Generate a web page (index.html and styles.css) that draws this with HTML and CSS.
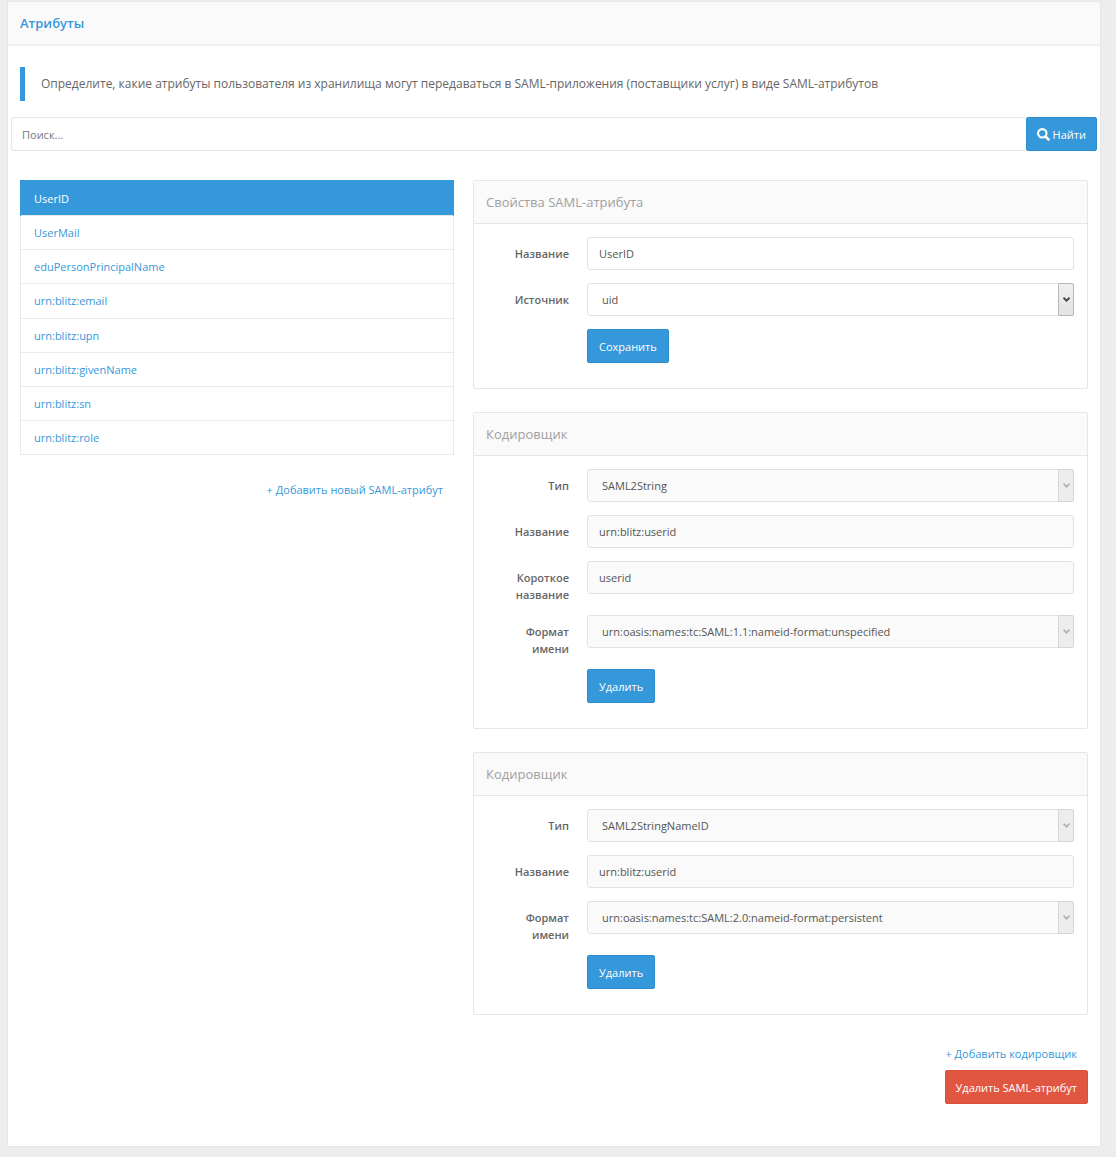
FILE: index.html
```html
<!DOCTYPE html>
<html lang="ru">
<head>
<meta charset="utf-8">
<meta name="viewport" content="width=device-width, initial-scale=1">
<title>Атрибуты</title>
<link rel="stylesheet" href="styles.css">
</head>
<body>
<main class="card">
  <header class="card-head"><h1 class="card-title">Атрибуты</h1></header>
  <div class="card-body">
    <p class="note">Определите, какие атрибуты пользователя из хранилища могут передаваться в SAML-приложения (поставщики услуг) в виде SAML-атрибутов</p>

    <form class="search" role="search">
      <input class="search-input" type="text" placeholder="Поиск..." aria-label="Поиск">
      <button class="btn search-btn" type="button">
        <svg class="search-icon" viewBox="0 0 13 13" aria-hidden="true"><circle cx="5.3" cy="5.3" r="4.2" fill="none" stroke="currentColor" stroke-width="2.1"/><path d="M8.5 8.5L11.6 11.6" stroke="currentColor" stroke-width="2.5" stroke-linecap="round"/></svg>
        Найти
      </button>
    </form>

    <div class="columns">
      <nav class="side">
        <ul class="list">
          <li class="list-row"><a class="list-link active" href="#">UserID</a></li>
          <li class="list-row"><a class="list-link" href="#">UserMail</a></li>
          <li class="list-row"><a class="list-link" href="#">eduPersonPrincipalName</a></li>
          <li class="list-row"><a class="list-link" href="#">urn:blitz:email</a></li>
          <li class="list-row"><a class="list-link" href="#">urn:blitz:upn</a></li>
          <li class="list-row"><a class="list-link" href="#">urn:blitz:givenName</a></li>
          <li class="list-row"><a class="list-link" href="#">urn:blitz:sn</a></li>
          <li class="list-row"><a class="list-link" href="#">urn:blitz:role</a></li>
        </ul>
        <a class="add-link" href="#">+ Добавить новый SAML-атрибут</a>
      </nav>

      <div class="details">
        <section class="panel">
          <h2 class="panel-title">Свойства SAML-атрибута</h2>
          <form class="panel-form">
            <div class="row">
              <label class="label" for="name">Название</label>
              <input class="field" id="name" type="text" value="UserID">
            </div>
            <div class="row">
              <label class="label" for="source">Источник</label>
              <div class="select">
                <select class="field" id="source"><option>uid</option></select>
                <span class="arrow"><svg class="chevron" viewBox="0 0 7 5" aria-hidden="true"><path d="M0.5 0.7L3.5 3.7L6.5 0.7" fill="none" stroke="currentColor" stroke-width="1.8"/></svg></span>
              </div>
            </div>
            <div class="actions"><button class="btn" type="button">Сохранить</button></div>
          </form>
        </section>

        <section class="panel">
          <h2 class="panel-title">Кодировщик</h2>
          <form class="panel-form">
            <div class="row">
              <label class="label" for="type1">Тип</label>
              <div class="select">
                <select class="field" id="type1" disabled><option>SAML2String</option></select>
                <span class="arrow"><svg class="chevron" viewBox="0 0 7 5" aria-hidden="true"><path d="M0.5 0.7L3.5 3.7L6.5 0.7" fill="none" stroke="currentColor" stroke-width="1.8"/></svg></span>
              </div>
            </div>
            <div class="row">
              <label class="label" for="name1">Название</label>
              <input class="field" id="name1" type="text" value="urn:blitz:userid" disabled>
            </div>
            <div class="row">
              <label class="label" for="short1">Короткое название</label>
              <input class="field" id="short1" type="text" value="userid" disabled>
            </div>
            <div class="row">
              <label class="label" for="format1">Формат имени</label>
              <div class="select">
                <select class="field" id="format1" disabled><option>urn:oasis:names:tc:SAML:1.1:nameid-format:unspecified</option></select>
                <span class="arrow"><svg class="chevron" viewBox="0 0 7 5" aria-hidden="true"><path d="M0.5 0.7L3.5 3.7L6.5 0.7" fill="none" stroke="currentColor" stroke-width="1.8"/></svg></span>
              </div>
            </div>
            <div class="actions"><button class="btn" type="button">Удалить</button></div>
          </form>
        </section>

        <section class="panel">
          <h2 class="panel-title">Кодировщик</h2>
          <form class="panel-form">
            <div class="row">
              <label class="label" for="type2">Тип</label>
              <div class="select">
                <select class="field" id="type2" disabled><option>SAML2StringNameID</option></select>
                <span class="arrow"><svg class="chevron" viewBox="0 0 7 5" aria-hidden="true"><path d="M0.5 0.7L3.5 3.7L6.5 0.7" fill="none" stroke="currentColor" stroke-width="1.8"/></svg></span>
              </div>
            </div>
            <div class="row">
              <label class="label" for="name2">Название</label>
              <input class="field" id="name2" type="text" value="urn:blitz:userid" disabled>
            </div>
            <div class="row">
              <label class="label" for="format2">Формат имени</label>
              <div class="select">
                <select class="field" id="format2" disabled><option>urn:oasis:names:tc:SAML:2.0:nameid-format:persistent</option></select>
                <span class="arrow"><svg class="chevron" viewBox="0 0 7 5" aria-hidden="true"><path d="M0.5 0.7L3.5 3.7L6.5 0.7" fill="none" stroke="currentColor" stroke-width="1.8"/></svg></span>
              </div>
            </div>
            <div class="actions"><button class="btn" type="button">Удалить</button></div>
          </form>
        </section>

        <div class="footer">
          <a class="add-link" href="#">+ Добавить кодировщик</a>
          <button class="btn danger" type="button">Удалить SAML-атрибут</button>
        </div>
      </div>
    </div>
  </div>
</main>
</body>
</html>
```
FILE: styles.css
```css
*, *::before, *::after { box-sizing: border-box; }

body {
  margin: 0;
  padding: 1px 15px 10px 7px;
  background: #ededed;
  color: #666;
  font-family: "Open Sans", "Noto Sans", sans-serif;
  font-size: 11px;
  line-height: 17px;
}

a { color: #3598db; text-decoration: none; }

.card {
  border: 1px solid #e6e6e6;
  background: #fff;
}

.card-head {
  padding: 12px;
  border-bottom: 2px solid #efefef;
  background: #fafafa;
}

.card-title {
  margin: 0;
  color: #3598db;
  font-size: 13px;
  font-weight: 600;
  line-height: 18px;
}

.card-body { padding: 21px 3px 42px; }

.note {
  margin: 0 9px;
  padding: 8px 16px;
  border-left: 5px solid #3598db;
  font-size: 12px;
  line-height: 18px;
}

.search {
  display: flex;
  margin-top: 16px;
}

.search-input {
  flex: 1;
  min-width: 0;
  height: 34px;
  padding: 0 10px;
  border: 1px solid #e5e5e5;
  border-right: 0;
  border-radius: 3px 0 0 3px;
  background: #fff;
  color: #555;
  font: inherit;
}

.search-input::placeholder { color: #777; opacity: 1; }

.btn {
  height: 34px;
  padding: 0 11px;
  border: 1px solid #2c8dd0;
  border-radius: 2px;
  background: #3598db;
  color: #fff;
  font: inherit;
}

.search-btn {
  display: flex;
  align-items: center;
  gap: 3px;
  padding: 0 10px;
}

.search-icon { width: 13px; height: 13px; }

.columns {
  display: grid;
  grid-template-columns: 434fr 615fr;
  gap: 19px;
  margin: 29px 9px 0;
}

.side, .details {
  display: flex;
  flex-direction: column;
}

.list {
  display: grid;
  grid-auto-rows: 1fr;
  min-height: 275px;
  margin: 0;
  padding: 0;
  border: 1px solid #e9e9e9;
  list-style: none;
}

.list-row { display: grid; }

.list-row + .list-row { border-top: 1px solid #e9e9e9; }

.list-link {
  display: flex;
  align-items: center;
  padding: 0 13px;
}

.list-link.active {
  margin: -1px;
  padding: 0 14px;
  background: #3598db;
  color: #fff;
}

.add-link { align-self: flex-end; margin: 0 11px; }

.side .add-link { margin-top: 26px; }

.details { gap: 23px; }

.panel { border: 1px solid #e6e6e6; border-radius: 2px; }

.panel-title {
  margin: 0;
  padding: 12px;
  border-bottom: 1px solid #e6e6e6;
  background: #fafafa;
  color: #a0a0a0;
  font-size: 13px;
  font-weight: 400;
  line-height: 18px;
}

.panel-form {
  display: flex;
  flex-direction: column;
  gap: 13px;
  padding: 13px 13px 25px;
}

.row {
  display: grid;
  grid-template-columns: 82px 1fr;
  gap: 18px;
  align-items: start;
}

.label {
  margin-bottom: -1px;
  padding: 8px 0 0 20px;
  font-weight: 600;
  text-align: right;
}

.field {
  width: 100%;
  height: 33px;
  padding: 0 11px;
  border: 1px solid #e2e2e2;
  border-radius: 3px;
  background: #fff;
  color: #555;
  font: inherit;
  appearance: none;
}

.field:disabled {
  background: #fafafa;
  color: #555;
  opacity: 1;
}

.select { position: relative; display: flex; }

.select .field { padding: 0 30px 0 14px; }

.arrow {
  position: absolute;
  top: 0;
  right: 0;
  display: flex;
  align-items: center;
  justify-content: center;
  width: 16px;
  height: 100%;
  border: 1px solid #b8b8b8;
  border-radius: 0 2px 2px 0;
  background: linear-gradient(#f0f0f0, #e2e2e2);
  color: #444;
  pointer-events: none;
}

.field:disabled + .arrow {
  border-color: #d6d6d6;
  background: #ededed;
  color: #b4b4b4;
}

.chevron { width: 7px; height: 5px; }

.actions { padding-left: 100px; }

.actions .btn { display: block; }

.footer {
  display: flex;
  flex-direction: column;
  align-items: flex-end;
  gap: 8px;
  padding-top: 7px;
}

.danger { border-color: #dc5039; background: #e05640; padding: 0 10px; }
```
